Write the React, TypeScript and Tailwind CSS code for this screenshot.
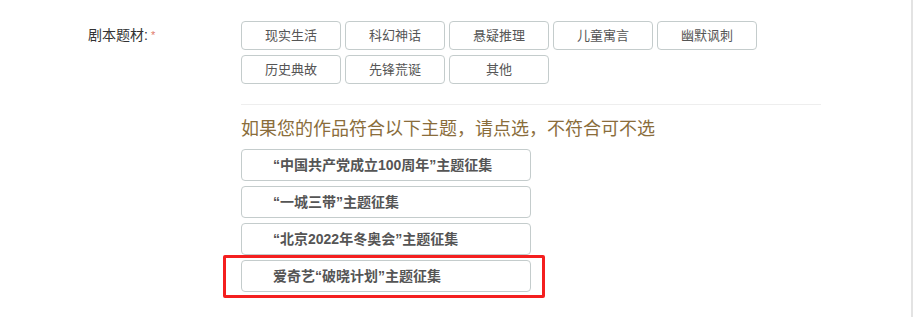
const GENRES = [
  "现实生活",
  "科幻神话",
  "悬疑推理",
  "儿童寓言",
  "幽默讽刺",
  "历史典故",
  "先锋荒诞",
  "其他",
];

const THEMES = [
  "“中国共产党成立100周年”主题征集",
  "“一城三带”主题征集",
  "“北京2022年冬奥会”主题征集",
  "爱奇艺“破晓计划”主题征集",
];

export default function App() {
  return (
    <div
      className="h-[317px] w-[913px] border-r-2 border-[#e3e3e3] bg-white"
      style={{ fontFamily: '"Liberation Sans", "Noto Sans CJK SC", sans-serif' }}
    >
      <div className="flex pl-[88px] pt-[21px]">
        <div className="flex h-[29px] w-[153px] items-center text-[14px] text-[#333]">
          剧本题材:<span className="ml-[3px] text-[11px] text-[#e07a6a]">*</span>
        </div>

        <div className="w-[580px]">
          <div className="flex w-[530px] flex-wrap gap-x-[4px] gap-y-[5px]">
            {GENRES.map((g) => (
              <button
                key={g}
                type="button"
                className="flex h-[29px] w-[100px] items-center justify-center rounded-[4px] border border-[#c4cccc] bg-white text-[13px] text-[#555]"
              >
                {g}
              </button>
            ))}
          </div>

          <div className="mt-[20px] border-t border-[#eeeeee]" />

          <p className="mt-[11px] text-[18px] leading-[26px] text-[#8a6d3b]">
            如果您的作品符合以下主题，请点选，不符合可不选
          </p>

          <div className="mt-[7px] flex flex-col gap-[5px]">
            {THEMES.map((t, i) => (
              <div key={t} className="relative w-[290px]">
                <button
                  type="button"
                  className="flex h-[32px] w-[290px] items-center rounded-[4px] border border-[#c4cccc] bg-white pl-[31px] text-[14px] font-bold text-[#555]"
                >
                  {t}
                </button>
                {i === THEMES.length - 1 && (
                  <div className="pointer-events-none absolute -left-[18px] -right-[14px] -top-[5px] -bottom-[6px] rounded-[2px] border-[3px] border-[#f41f1f]" />
                )}
              </div>
            ))}
          </div>
        </div>
      </div>
    </div>
  );
}
